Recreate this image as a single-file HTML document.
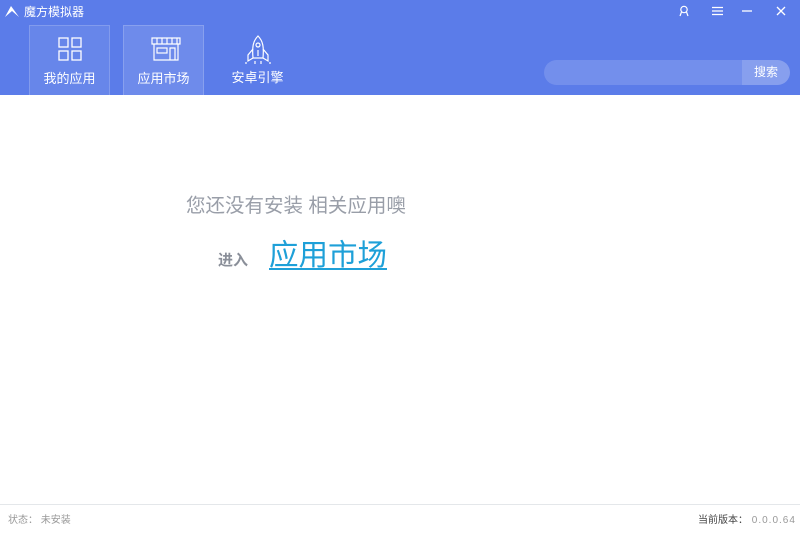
<!DOCTYPE html>
<html><head><meta charset="utf-8"><style>
*{margin:0;padding:0;box-sizing:border-box}
body{width:800px;height:533px;overflow:hidden;background:#fff;font-family:"Liberation Sans","Noto Sans CJK SC",sans-serif;position:relative}
#hd{position:absolute;left:0;top:0;width:800px;height:95px;background:#5b7ce9}
.t{position:absolute;color:#fff;font-size:13px;white-space:nowrap}
.tab{position:absolute;top:25px;width:81px;height:70px;border:1px solid rgba(255,255,255,.18);border-bottom:none}
.tab span{position:absolute;left:0;right:0;top:42px;text-align:center;color:#fff;font-size:13px}
.tab svg{position:absolute;left:26px;top:9px}
</style></head><body>
<div id="hd">
<svg style="position:absolute;left:4px;top:4px" width="16" height="14" viewBox="0 0 16 14"><path d="M1 13 L7 2 L15 13 L8 7 Z" fill="#fff"/></svg>
<div class="t" style="left:24px;top:3px;font-size:12px">魔方模拟器</div>
<svg style="position:absolute;left:678px;top:5px" width="12" height="12" viewBox="0 0 12 12" fill="none" stroke="#fff" stroke-width="1.2"><circle cx="6" cy="4.5" r="3.2"/><path d="M3.5 7 L2 11 M8.5 7 L10 11"/></svg>
<svg style="position:absolute;left:712px;top:6px" width="11" height="10" stroke="#fff" stroke-width="1.2"><path d="M0 1.5H11M0 5H11M0 8.5H11"/></svg>
<svg style="position:absolute;left:742px;top:6px" width="11" height="10" stroke="#fff" stroke-width="1.3"><path d="M0 5H10"/></svg>
<svg style="position:absolute;left:776px;top:6px" width="10" height="10" stroke="#fff" stroke-width="1.3"><path d="M1 1L9 9M9 1L1 9"/></svg>
<div class="tab" style="left:29px;background:rgba(255,255,255,.08)">
<svg width="28" height="28" viewBox="0 0 28 28" fill="none" stroke="#fff" stroke-width="1.3"><rect x="3" y="3" width="9" height="9"/><rect x="16" y="3" width="9" height="9"/><rect x="3" y="16" width="9" height="9"/><rect x="16" y="16" width="9" height="9"/></svg>
<span>我的应用</span></div>
<div class="tab" style="left:123px;background:rgba(255,255,255,.12)">
<svg width="32" height="30" viewBox="0 0 32 30" fill="none" stroke="#fff" stroke-width="1.2"><path d="M2 3H30V9H2Z M7 3V9M12 3V9M17 3V9M22 3V9M27 3V9"/><path d="M4 9V25H28V9"/><rect x="7" y="13" width="10" height="5"/><path d="M20 25V13H25V25"/></svg>
<span>应用市场</span></div>
<div class="tab" style="left:217px;border:none">
<svg width="30" height="32" viewBox="0 0 30 32" fill="none" stroke="#fff" stroke-width="1.2"><path d="M15 2C10 7 9 13 10 24H20C21 13 20 7 15 2Z"/><circle cx="15" cy="11" r="2"/><path d="M15 16V22M10 15L5 21V27L10 24M20 15L25 21V27L20 24M12 27V30M18 27V30M3 28V30M27 28V30"/></svg>
<span>安卓引擎</span></div>
<div style="position:absolute;left:544px;top:60px;width:246px;height:25px;border-radius:13px;background:rgba(255,255,255,.15);overflow:hidden">
<div style="position:absolute;right:0;top:0;width:48px;height:25px;background:rgba(255,255,255,.15);color:#fff;font-size:12px;line-height:25px;text-align:center">搜索</div></div>
</div>
<div class="t" style="left:186px;top:189px;font-size:19.5px;color:#999ea8">您还没有安装 相关应用噢</div>
<div class="t" style="left:218px;top:249px;font-size:15px;color:#8a8f99;font-weight:bold">进入</div>
<div class="t" style="left:269px;top:232px;font-size:29.5px;color:#1ea0d8">应用市场</div>
<div style="position:absolute;left:269px;top:268px;width:118px;height:2px;background:#1ea0d8"></div>
<div style="position:absolute;left:0;top:504px;width:800px;height:1px;background:#e4e7ea"></div>
<div class="t" style="left:8px;top:511px;font-size:10px;color:#999">状态：&nbsp;未安装</div>
<div class="t" style="left:698px;top:511px;font-size:10px;color:#444">当前版本：<span style="color:#999;letter-spacing:1px">&nbsp;0.0.0.64</span></div>
</body></html>
